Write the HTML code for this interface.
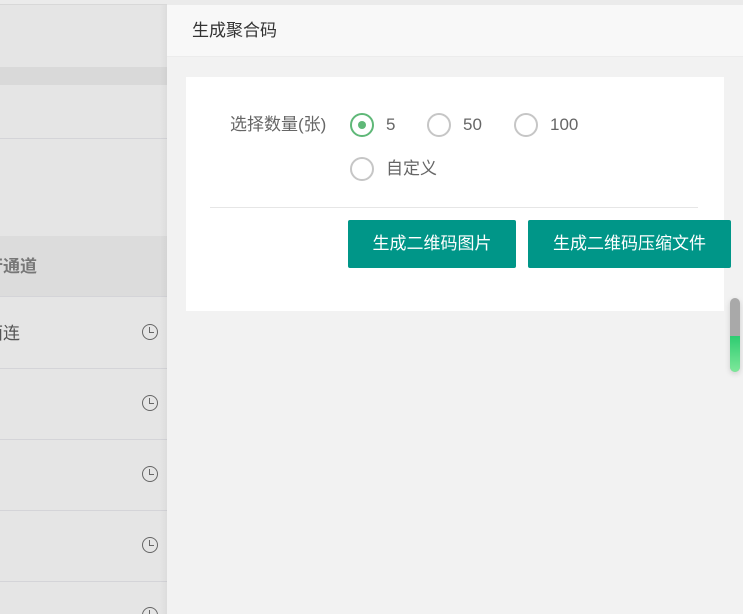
<!DOCTYPE html>
<html><head><meta charset="utf-8"><style>
*{margin:0;padding:0;box-sizing:border-box}
html,body{width:743px;height:614px;overflow:hidden}
body{background:#e5e5e5;font-family:"Liberation Sans","Noto Sans CJK SC",sans-serif;position:relative}
.a{position:absolute}
.clock{position:absolute;left:142px;width:16px;height:16px;border:1.5px solid #666;border-radius:50%}
.clock:after{content:"";position:absolute;left:5.5px;top:2px;width:4px;height:5px;border-left:1.5px solid #666;border-bottom:1.5px solid #666}
.line{position:absolute;left:0;width:167px;height:1px;background:#d4d4d8}
.radio{position:absolute;width:24px;height:24px;border:2px solid #c6c6c6;border-radius:50%;background:#fff}
.lbl{position:absolute;font-size:17px;color:#666}
.btn{position:absolute;top:220px;height:48px;background:#009688;color:#fff;font-size:17px;border-radius:2px;text-align:center;line-height:48px}
</style></head><body>
<div class="a" style="left:0;top:0;width:743px;height:5px;background:#ebebeb"></div>
<div class="a" style="left:0;top:4px;width:167px;height:1px;background:#d8d8d8"></div>
<div class="a" style="left:0;top:67px;width:167px;height:18px;background:#d9d9d9"></div>
<div class="line" style="top:138px"></div>
<div class="a" style="left:0;top:236px;width:167px;height:60px;background:#dcdcdc"></div>
<div class="a" style="left:-14px;top:253px;font-size:17px;font-weight:bold;color:#777;line-height:28px">行通道</div>
<div class="line" style="top:296px"></div>
<div class="a" style="left:-14px;top:320px;font-size:17px;color:#555;line-height:28px">面连</div>
<div class="clock" style="top:324px"></div>
<div class="line" style="top:368px"></div>
<div class="clock" style="top:395px"></div>
<div class="line" style="top:439px"></div>
<div class="clock" style="top:466px"></div>
<div class="line" style="top:510px"></div>
<div class="clock" style="top:537px"></div>
<div class="line" style="top:581px"></div>
<div class="clock" style="top:607px"></div>
<div class="a" style="left:160px;top:5px;width:7px;height:609px;background:linear-gradient(to right,rgba(0,0,0,0),rgba(0,0,0,0.04))"></div>

<div class="a" style="left:167px;top:5px;width:576px;height:609px;background:#f2f2f2"></div>
<div class="a" style="left:167px;top:5px;width:576px;height:52px;background:#f8f8f8;border-bottom:1px solid #ececec"></div>
<div class="a" style="left:192px;top:19px;font-size:17px;color:#333;line-height:24px">生成聚合码</div>
<div class="a" style="left:186px;top:77px;width:538px;height:234px;background:#fff"></div>
<div class="lbl" style="left:230px;top:113px;line-height:24px">选择数量(张)</div>
<div class="radio" style="left:350px;top:113px;border-color:#5fb878"><div style="position:absolute;left:6px;top:6px;width:8px;height:8px;border-radius:50%;background:#5fb878"></div></div>
<div class="lbl" style="left:386px;top:113px;line-height:24px">5</div>
<div class="radio" style="left:427px;top:113px"></div>
<div class="lbl" style="left:463px;top:113px;line-height:24px">50</div>
<div class="radio" style="left:514px;top:113px"></div>
<div class="lbl" style="left:550px;top:113px;line-height:24px">100</div>
<div class="radio" style="left:350px;top:157px"></div>
<div class="lbl" style="left:386px;top:157px;line-height:24px">自定义</div>
<div class="a" style="left:210px;top:207px;width:488px;height:1px;background:#e6e6e6"></div>
<div class="btn" style="left:348px;width:168px">生成二维码图片</div>
<div class="btn" style="left:528px;width:203px">生成二维码压缩文件</div>
<div class="a" style="left:730px;top:298px;width:10px;height:74px;border-radius:5px;background:#a9a9a9;box-shadow:0 2px 6px rgba(0,0,0,0.15);overflow:hidden"><div style="position:absolute;left:0;top:38px;width:10px;height:36px;background:linear-gradient(#2ecc71,#7ee89a)"></div></div>
</body></html>
